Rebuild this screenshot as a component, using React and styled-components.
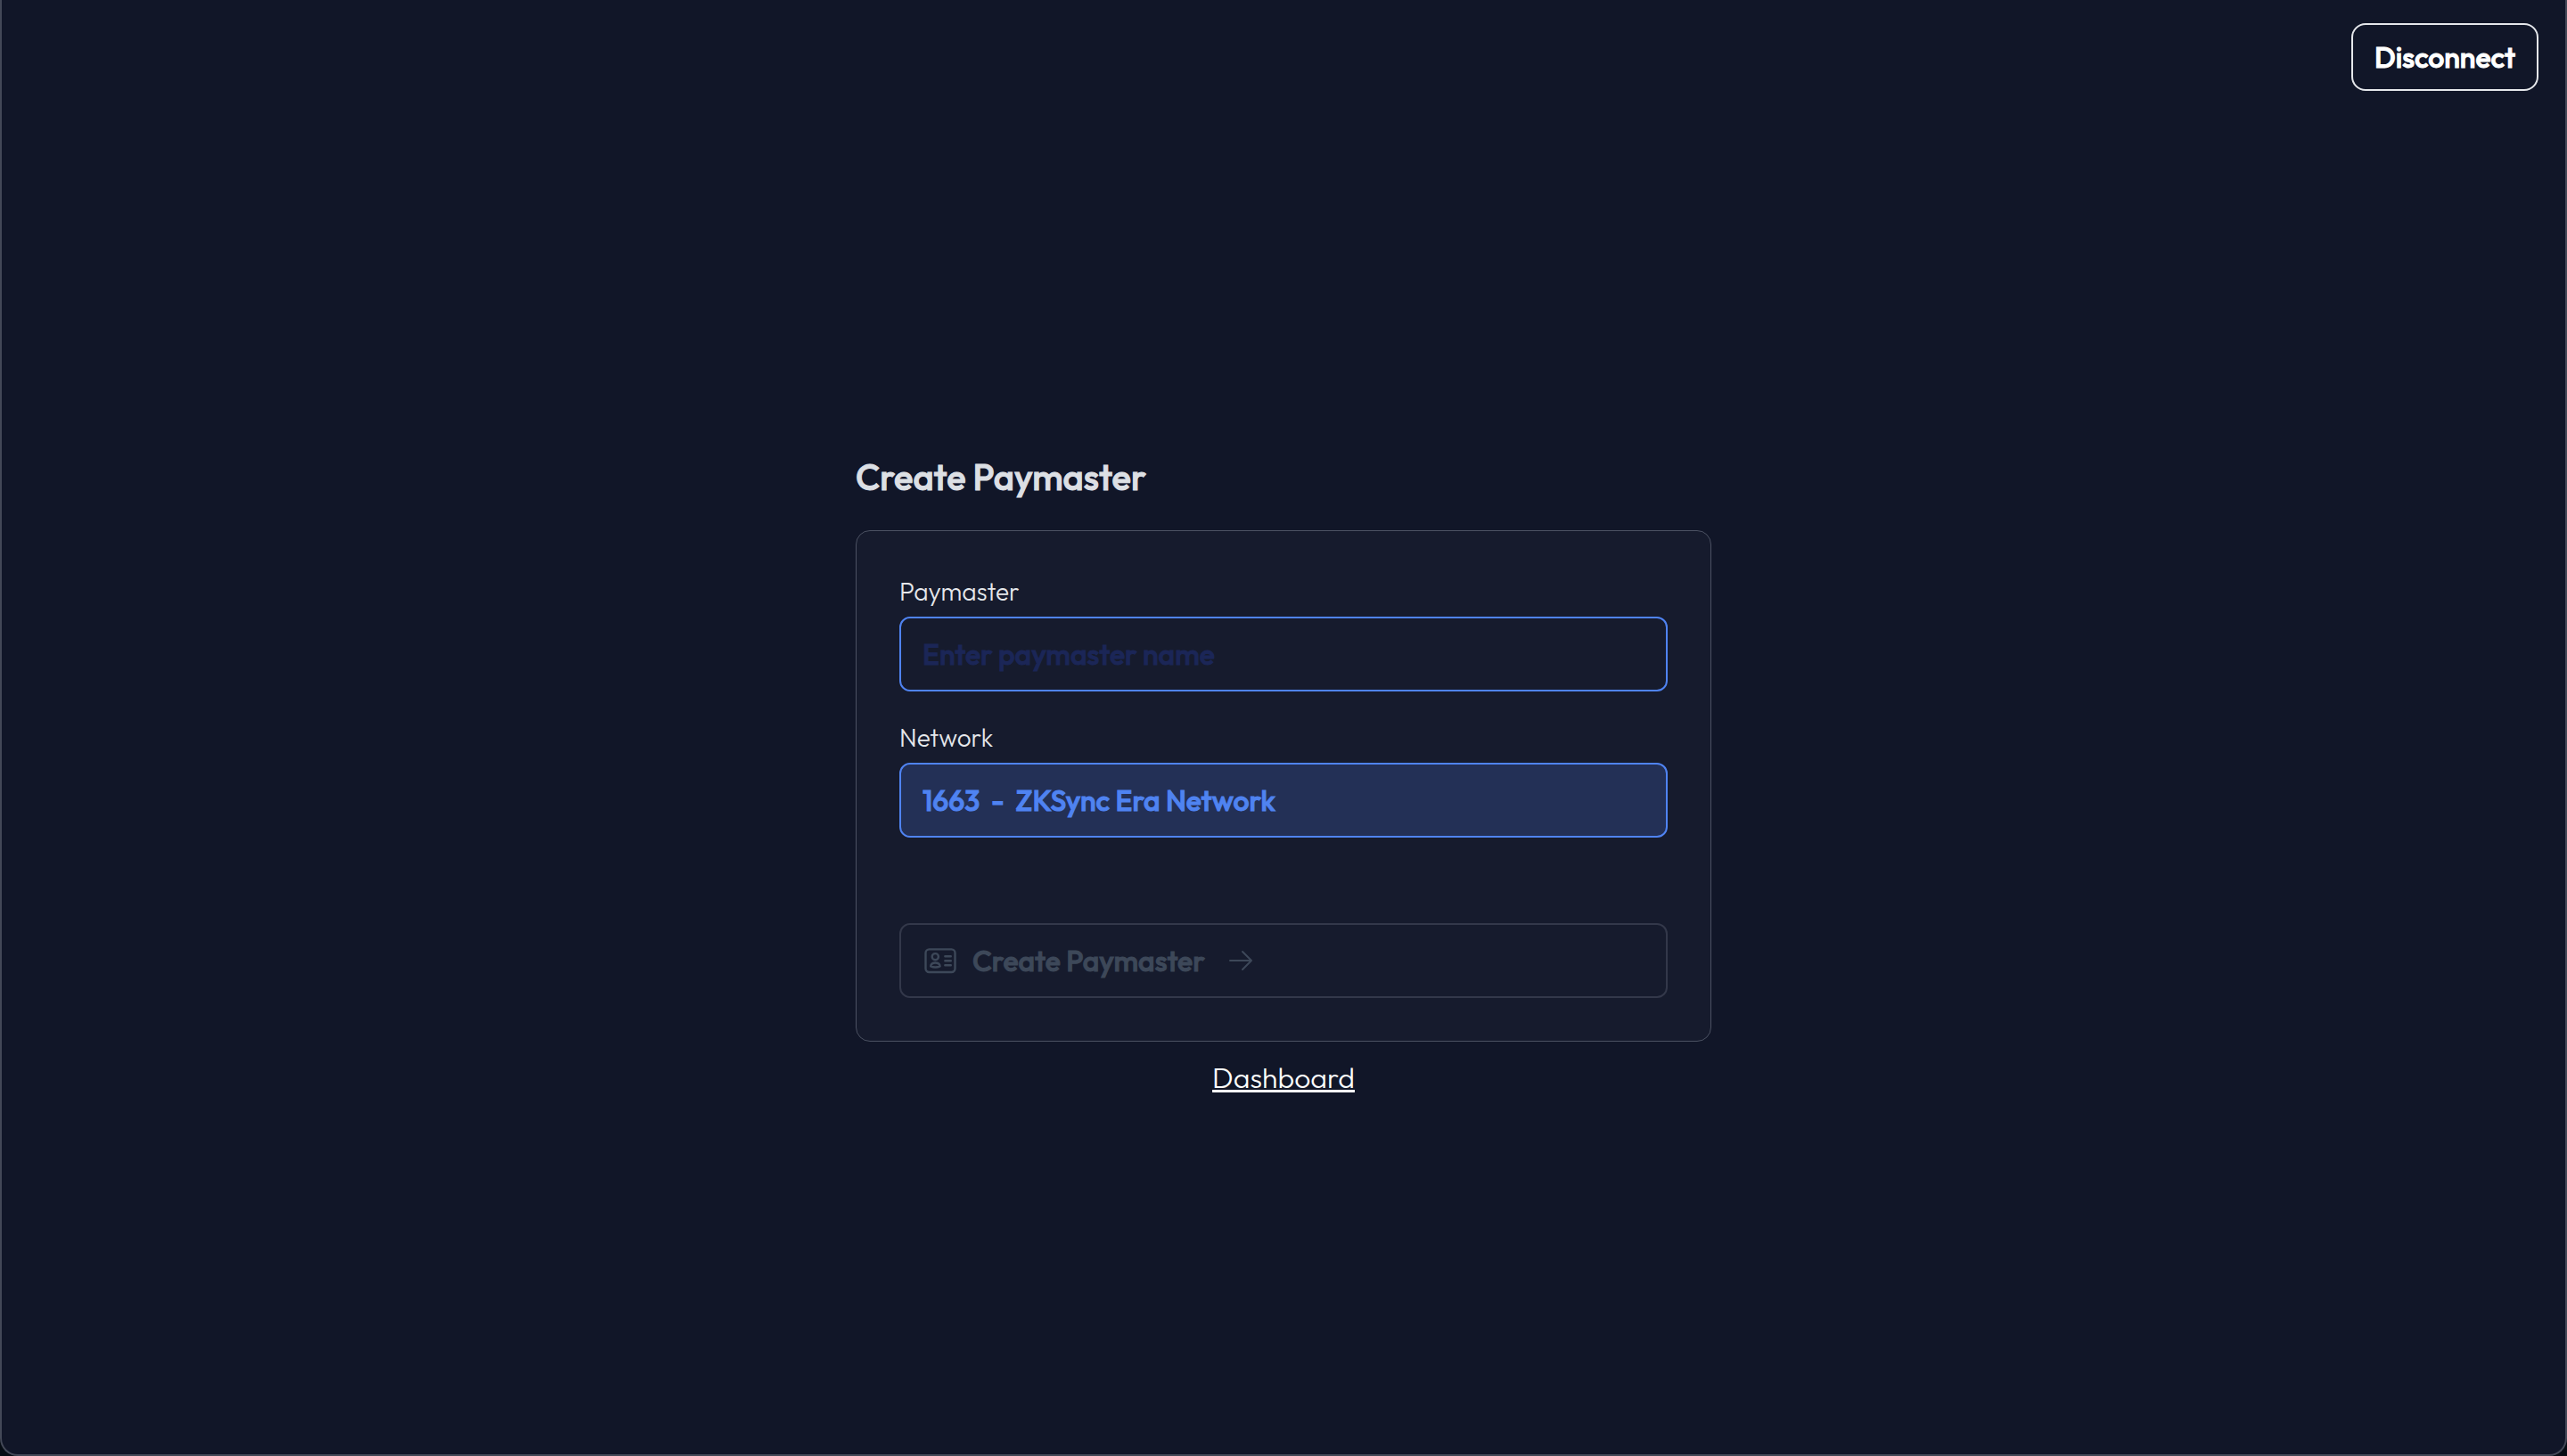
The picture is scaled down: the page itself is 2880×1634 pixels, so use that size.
import React, { useId, useState } from 'react';
import styled, { createGlobalStyle, css } from 'styled-components';

const GlobalStyle = createGlobalStyle`
  *, *::before, *::after { box-sizing: border-box; }
  body {
    margin: 0;
    background: #060c14;
    color: #ffffff;
    font-family: Outfit, Lato, sans-serif;
  }
  input, button { font: inherit; }
`;

const strongText = css`
  font-weight: 500;
  -webkit-text-stroke: 1px currentColor;
`;

const Frame = styled.div`
  display: flex;
  flex-direction: column;
  min-height: 100vh;
  border: 2px solid #434857;
  border-top: 0;
  border-radius: 0 0 20px 20px;
  background: #111628;
`;

const Header = styled.header`
  display: flex;
  justify-content: flex-end;
  padding: 26px 30px 6px;
`;

const OutlineButton = styled.button`
  height: 76px;
  padding: 0 24px;
  border: 2px solid #e5e7eb;
  border-radius: 16px;
  background: transparent;
  color: #ffffff;
  font-size: 32px;
  line-height: 48px;
  ${strongText}
`;

const Main = styled.main`
  flex: 1;
  display: flex;
  flex-direction: column;
  align-items: center;
  justify-content: center;
`;

const Section = styled.section`
  width: 100%;
  max-width: 960px;
`;

const Title = styled.h1`
  margin: 0 0 32px;
  color: #dcdfe4;
  font-size: 40px;
  line-height: 56px;
  ${strongText}
`;

const Card = styled.form`
  display: flex;
  flex-direction: column;
  gap: 32px;
  padding: 48px;
  border: 1px solid #4b5162;
  border-radius: 16px;
  background: #161b2d;
`;

const Field = styled.div`
  display: flex;
  flex-direction: column;
  gap: 8px;
`;

const Label = styled.label`
  color: #e5e7eb;
  font-size: 28px;
  font-weight: 300;
  line-height: 40px;
`;

const TextInput = styled.input`
  width: 100%;
  height: 84px;
  padding: 0 24px;
  border: 2px solid #4f83f1;
  border-radius: 12px;
  outline: none;
  background: ${({ $filled }) => ($filled ? '#233056' : 'transparent')};
  color: #4f83f1;
  font-size: 32px;
  ${strongText}

  &::placeholder {
    color: #1b2657;
    opacity: 1;
    -webkit-text-stroke: 1px #1b2657;
  }
`;

const SubmitButton = styled.button`
  display: flex;
  align-items: center;
  width: 100%;
  height: 84px;
  margin-top: 64px;
  padding: 0 24px;
  border: 2px solid #33384a;
  border-radius: 12px;
  background: transparent;
  color: #3d4859;
  font-size: 32px;
  ${strongText}
`;

const ButtonText = styled.span`
  padding: 0 24px 0 16px;
`;

const Icon = styled.svg`
  flex: none;
  fill: none;
  stroke: currentColor;
  stroke-linecap: round;
  stroke-linejoin: round;
`;

const FooterLink = styled.a`
  display: block;
  width: fit-content;
  margin: 16px auto 0;
  color: #ffffff;
  font-size: 32px;
  font-weight: 300;
  line-height: 48px;
  text-decoration-thickness: 3px;
  text-underline-offset: 2px;
  text-decoration-skip-ink: none;
`;

function IdCardIcon() {
  return (
    <Icon width="40" height="40" viewBox="0 0 40 40" strokeWidth="2.4" aria-hidden="true">
      <rect x="3.5" y="7.4" width="33" height="25.600" rx="4" />
      <circle cx="14.300" cy="15.700" r="3.600" />
      <path d="M9.200 26.400c.3-2.800 2.200-3.900 5.200-3.900s4.900 1.100 5.200 3.900c-3.200 1.400-7.200 1.400-10.400 0z" />
      <path d="M25.300 15.200h6.500M25.300 20.200h6.500M25.300 25.200h6.500" />
    </Icon>
  );
}

function ArrowIcon() {
  return (
    <Icon width="32" height="32" viewBox="0 0 32 32" strokeWidth="2" aria-hidden="true">
      <path d="M4 16h24M18 6l10 10-10 10" />
    </Icon>
  );
}

function LabeledInput({ label, ...inputProps }) {
  const id = useId();
  return (
    <Field>
      <Label htmlFor={id}>{label}</Label>
      <TextInput id={id} type="text" {...inputProps} />
    </Field>
  );
}

export default function App() {
  const [name, setName] = useState('');
  return (
    <>
      <GlobalStyle />
      <Frame>
        <Header>
          <OutlineButton type="button">Disconnect</OutlineButton>
        </Header>
        <Main>
          <Section>
            <Title>Create Paymaster</Title>
            <Card onSubmit={(event) => event.preventDefault()}>
              <LabeledInput
                label="Paymaster"
                placeholder="Enter paymaster name"
                value={name}
                onChange={(event) => setName(event.target.value)}
              />
              <LabeledInput
                label="Network"
                value={'1663\u00a0 -\u00a0 ZKSync Era Network'}
                readOnly
                $filled
              />
              <SubmitButton type="submit" disabled={!name}>
                <IdCardIcon />
                <ButtonText>Create Paymaster</ButtonText>
                <ArrowIcon />
              </SubmitButton>
            </Card>
            <FooterLink href="#dashboard">Dashboard</FooterLink>
          </Section>
        </Main>
      </Frame>
    </>
  );
}
